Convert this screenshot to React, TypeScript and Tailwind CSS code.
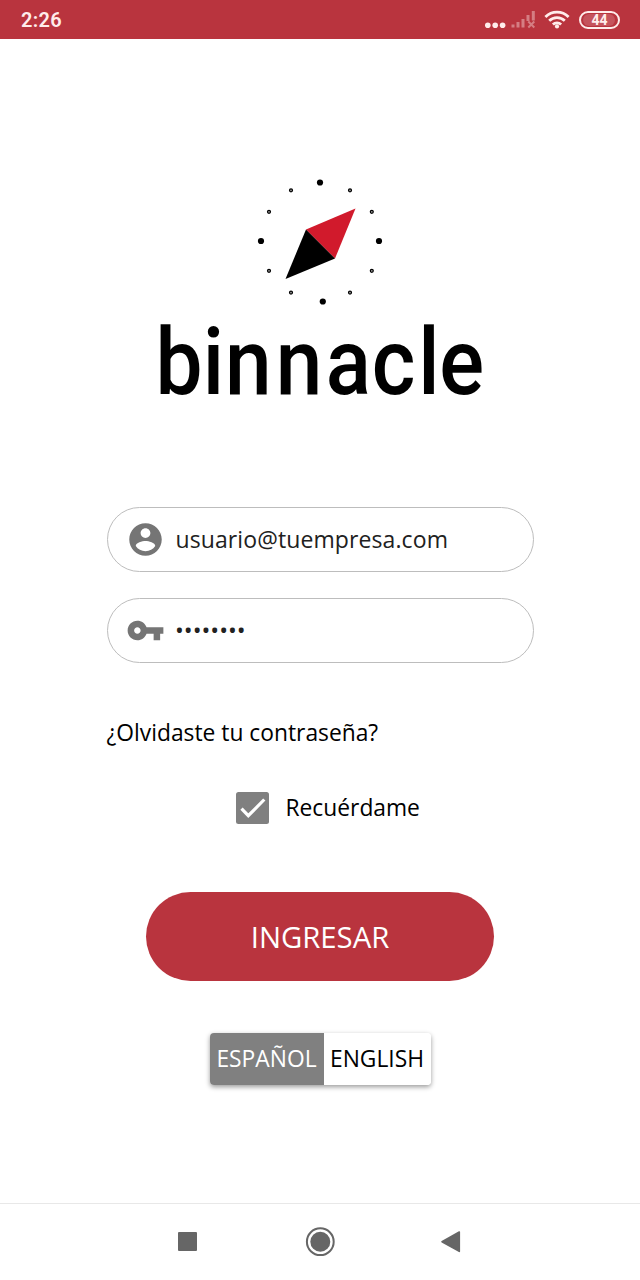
import React, { useState } from 'react';

const bigDots = [[320, 182.5], [261, 241], [379, 241], [322.8, 301.5]];

const smallDots = [
  [291, 190.3], [350, 190.3],
  [269, 211.8], [371.8, 211.8],
  [269, 270.8], [371.8, 270.8],
  [291, 292.6], [350, 292.6],
];

const StatusBar: React.FC = () => (
  <header className="flex h-[39px] items-center justify-between bg-[#b9343e] pl-[21px] pr-[20px] font-['Roboto',sans-serif] text-[#ffeceb]">
    <span className="text-xl font-semibold leading-none tracking-[0.3px]">2:26</span>
    <div className="flex h-full items-center">
      <svg width="85" height="39" viewBox="485 0 85 39" fill="currentColor">
        <circle cx="487.8" cy="25.2" r="2.8" />
        <circle cx="495.2" cy="25.2" r="2.8" />
        <circle cx="502.6" cy="25.2" r="2.8" />
        <g opacity="0.4">
          <rect x="511.5" y="24.5" width="3" height="3" />
          <rect x="516.5" y="22" width="3" height="5.5" />
          <rect x="521.5" y="19" width="3" height="8.5" />
          <rect x="526.5" y="15" width="3" height="6" />
          <rect x="531.8" y="11" width="3" height="9.5" />
          <path d="M528.3 21.5l6 6M534.3 21.5l-6 6" stroke="currentColor" strokeWidth="2" />
        </g>
        <g fill="none" stroke="currentColor" strokeWidth="2.8">
          <path d="M545.4 16.9a16.6 16.6 0 0 1 23.2 0" />
          <path d="M549.2 20.8a11.2 11.2 0 0 1 15.6 0" />
          <path d="M552.9 24.6a6 6 0 0 1 8.2 0" />
        </g>
        <circle cx="557" cy="26.4" r="2.1" />
      </svg>
      <div className="relative ml-[9px] flex h-[18px] w-[41px] items-center justify-center rounded-full border-2 border-[#ffeceb] text-sm font-bold leading-none">
        <span className="absolute inset-y-[1px] left-[2px] w-[32px] rounded-full bg-[#d2717a]/50" />
        <span className="relative">44</span>
      </div>
    </div>
  </header>
);

const Logo: React.FC = () => (
  <svg width="360" height="260" viewBox="140 172 360 260" className="mx-auto mt-[133px] shrink-0">
    {bigDots.map(([x, y]) => (
      <circle key={`${x}-${y}`} cx={x} cy={y} r="3.1" />
    ))}
    {smallDots.map(([x, y]) => (
      <circle key={`${x}-${y}`} cx={x} cy={y} r="1.5" fill="#999" stroke="#000" strokeWidth="1.2" />
    ))}
    <path d="M355.5 208.5L306 229.5L335 258.5z" fill="#d11a2c" />
    <path d="M285.5 279L306 229.5L335 258.5z" />
    <text
      transform="translate(0 393.5) scale(0.91 1)"
      x="171 222.8 247.4 303 358 408.6 459.5 482.6"
      y="0"
      fontFamily="Roboto, sans-serif"
      fontSize="92"
      fontWeight="500"
    >
      binnacle
    </text>
  </svg>
);

const AccountIcon: React.FC = () => (
  <svg viewBox="0 0 24 24" fill="currentColor" className="size-[39px] shrink-0 text-[#757575]">
    <path d="M12 2C6.48 2 2 6.48 2 12s4.48 10 10 10 10-4.48 10-10S17.52 2 12 2zm0 3c1.66 0 3 1.34 3 3s-1.34 3-3 3-3-1.34-3-3 1.34-3 3-3zm0 14.2c-2.5 0-4.71-1.28-6-3.22.03-1.99 4-3.08 6-3.08 1.99 0 5.97 1.09 6 3.08-1.29 1.94-3.5 3.22-6 3.22z" />
  </svg>
);

const KeyIcon: React.FC = () => (
  <svg viewBox="0 0 24 24" fill="currentColor" className="size-[39px] shrink-0 text-[#757575]">
    <path d="M12.65 10C11.83 7.67 9.61 6 7 6c-3.31 0-6 2.69-6 6s2.69 6 6 6c2.61 0 4.83-1.67 5.65-4H17v4h4v-4h2v-4H12.65zM7 14c-1.1 0-2-.9-2-2s.9-2 2-2 2 .9 2 2-.9 2-2 2z" />
  </svg>
);

const App: React.FC = () => {
  const [email, setEmail] = useState('usuario@tuempresa.com');
  const [password, setPassword] = useState('binnacle');
  const [remember, setRemember] = useState(true);
  const [lang, setLang] = useState('es');

  return (
    <div className="flex h-[1280px] w-[640px] flex-col bg-white font-['Open_Sans',sans-serif] text-black">
      <StatusBar />
      <Logo />

      <main className="mx-auto mt-[75px] flex w-[427px] flex-col">
        {/* Credentials */}
        <label className="flex h-[65px] items-center rounded-full border border-[#bdbdbd] pl-[18.5px]">
          <AccountIcon />
          <input
            className="ml-[10.5px] w-[320px] text-[23px] tracking-[0.1px] text-[#212121] outline-none"
            value={email}
            onChange={(e) => setEmail(e.target.value)}
          />
        </label>
        <label className="mt-[26px] flex h-[65px] items-center rounded-full border border-[#bdbdbd] pl-[18.5px]">
          <KeyIcon />
          <input
            type="password"
            className="ml-[10px] w-[320px] text-[23.5px] text-[#212121] outline-none"
            value={password}
            onChange={(e) => setPassword(e.target.value)}
          />
        </label>

        <a href="#" className="mt-[54px] whitespace-nowrap text-[22.8px] leading-8">¿Olvidaste tu contraseña?</a>

        <button className="ml-[129px] mt-[43px] flex h-8 items-center gap-[17px]" onClick={() => setRemember(!remember)}>
          <svg width="33" height="32" viewBox="0 0 33 32">
            <rect width="33" height="32" rx="2.5" fill="#808080" />
            {remember && <path d="M5.5 16.7L12.3 23.7L28.3 7.5" fill="none" stroke="#fff" strokeWidth="3.2" />}
          </svg>
          <span className="text-[22.8px] leading-8">Recuérdame</span>
        </button>

        <button className="mx-auto mt-[68px] h-[89px] w-[348px] rounded-full bg-[#b9343e] pt-[2px] text-[29.3px] text-white">
          INGRESAR
        </button>

        {/* Language */}
        <div className="ml-[103px] mt-[52px] flex h-[52px] w-[221px] overflow-hidden rounded shadow-[0_2px_5px_rgba(0,0,0,0.4)]">
          {[
            { id: 'es', label: 'ESPAÑOL' },
            { id: 'en', label: 'ENGLISH' },
          ].map(({ id, label }) => (
            <button
              key={id}
              onClick={() => setLang(id)}
              className={`pt-px text-[22.8px] first:w-[114px] last:w-[107px] ${lang === id ? 'bg-[#808080] text-white' : 'bg-white text-black'}`}
            >
              {label}
            </button>
          ))}
        </div>
      </main>

      <nav className="mt-auto flex h-[77px] justify-center border-t border-[#e8e8e8]">
        <svg width="320" height="76" viewBox="160 1204 320 76" fill="#666">
          <rect x="178" y="1232" width="19" height="19" rx="1" />
          <circle cx="320.3" cy="1241.7" r="13.4" fill="none" stroke="#666" strokeWidth="2" />
          <circle cx="320.3" cy="1241.7" r="10" />
          <path d="M442 1241.7L459.3 1232V1251.4z" stroke="#666" strokeWidth="1.6" strokeLinejoin="round" />
        </svg>
      </nav>
    </div>
  );
};

export default App;
